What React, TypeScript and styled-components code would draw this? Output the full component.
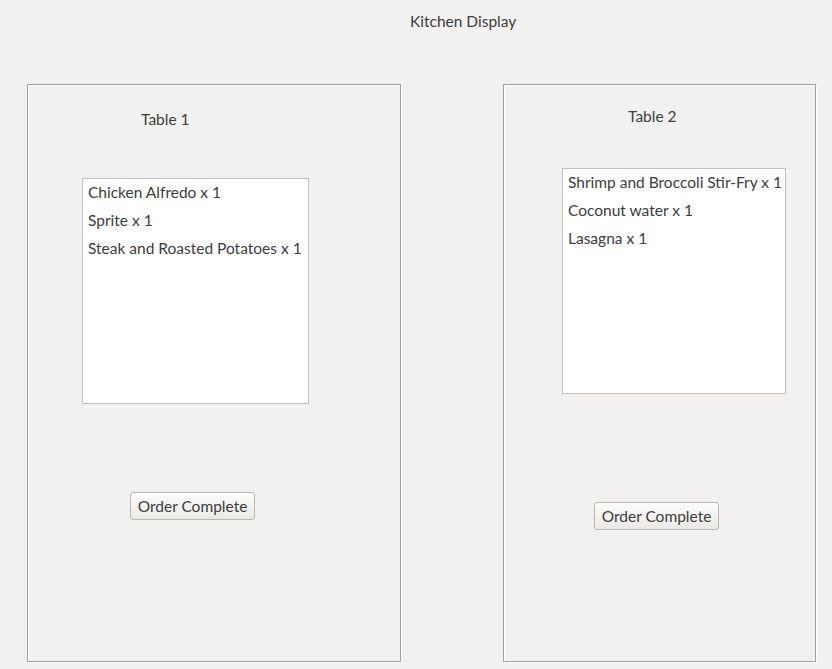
import React from "react";
import styled, { createGlobalStyle } from "styled-components";

const GlobalStyle = createGlobalStyle`
  html, body {
    margin: 0;
    padding: 0;
    background: #f2f1f0;
  }
  body {
    width: 832px;
    height: 669px;
    overflow: hidden;
    font-family: Lato, "Open Sans", sans-serif;
    color: #3c3c3c;
  }
`;

const Page = styled.div`
  display: flex;
  flex-direction: column;
  width: 832px;
  height: 669px;
`;

const Title = styled.div`
  height: 42px;
  line-height: 42px;
  font-size: 15.5px;
  padding-left: 410px;
  margin-bottom: 42px;
`;

const Columns = styled.div`
  display: flex;
  align-items: flex-start;
  padding-left: 27px;
  gap: 102px;
`;

const Panel = styled.section<{ $w: number }>`
  box-sizing: border-box;
  width: ${(p) => p.$w}px;
  height: 578px;
  border: 1px solid #a3a19e;
  box-shadow: inset 1px 1px 0 #ffffff, 1px 1px 0 #ffffff;
  display: flex;
  flex-direction: column;
  align-items: flex-start;
`;

const TableLabel = styled.div<{ $x: number; $top: number }>`
  margin-left: ${(p) => p.$x}px;
  margin-top: ${(p) => p.$top}px;
  height: 20px;
  line-height: 20px;
  font-size: 15.5px;
`;

const OrderList = styled.ul<{ $x: number; $top: number; $w: number }>`
  box-sizing: border-box;
  list-style: none;
  margin: ${(p) => p.$top}px 0 0 ${(p) => p.$x}px;
  padding: 0 0 0 5px;
  width: ${(p) => p.$w}px;
  height: 226px;
  background: #ffffff;
  border: 1px solid #c3c0bb;
`;

const OrderItem = styled.li`
  height: 28px;
  line-height: 26px;
  font-size: 15.5px;
  white-space: nowrap;
`;

const CompleteButton = styled.button<{ $x: number; $top: number }>`
  box-sizing: border-box;
  margin: ${(p) => p.$top}px 0 0 ${(p) => p.$x}px;
  width: 125px;
  height: 28px;
  padding: 0 0 1px;
  border: 1px solid #bab6b0;
  border-radius: 3px;
  background: linear-gradient(#fdfdfc, #ebe9e6);
  box-shadow: inset 0 1px 0 #ffffff;
  font-family: inherit;
  font-size: 15.5px;
  color: #3c3c3c;
`;

type TableData = {
  name: string;
  items: string[];
  width: number;
  labelX: number;
  labelTop: number;
  listX: number;
  listTop: number;
  listW: number;
  btnX: number;
  btnTop: number;
};

const tables: TableData[] = [
  {
    name: "Table 1",
    items: ["Chicken Alfredo x 1", "Sprite x 1", "Steak and Roasted Potatoes x 1"],
    width: 374,
    labelX: 113,
    labelTop: 24,
    listX: 54,
    listTop: 49,
    listW: 227,
    btnX: 102,
    btnTop: 88,
  },
  {
    name: "Table 2",
    items: ["Shrimp and Broccoli Stir-Fry x 1", "Coconut water x 1", "Lasagna x 1"],
    width: 313,
    labelX: 124,
    labelTop: 21,
    listX: 58,
    listTop: 42,
    listW: 224,
    btnX: 90,
    btnTop: 108,
  },
];

export default function App() {
  return (
    <>
      <GlobalStyle />
      <Page>
        <Title>Kitchen Display</Title>
        <Columns>
          {tables.map((t) => (
            <Panel key={t.name} $w={t.width}>
              <TableLabel $x={t.labelX} $top={t.labelTop}>
                {t.name}
              </TableLabel>
              <OrderList $x={t.listX} $top={t.listTop} $w={t.listW}>
                {t.items.map((it) => (
                  <OrderItem key={it}>{it}</OrderItem>
                ))}
              </OrderList>
              <CompleteButton $x={t.btnX} $top={t.btnTop}>
                Order Complete
              </CompleteButton>
            </Panel>
          ))}
        </Columns>
      </Page>
    </>
  );
}
